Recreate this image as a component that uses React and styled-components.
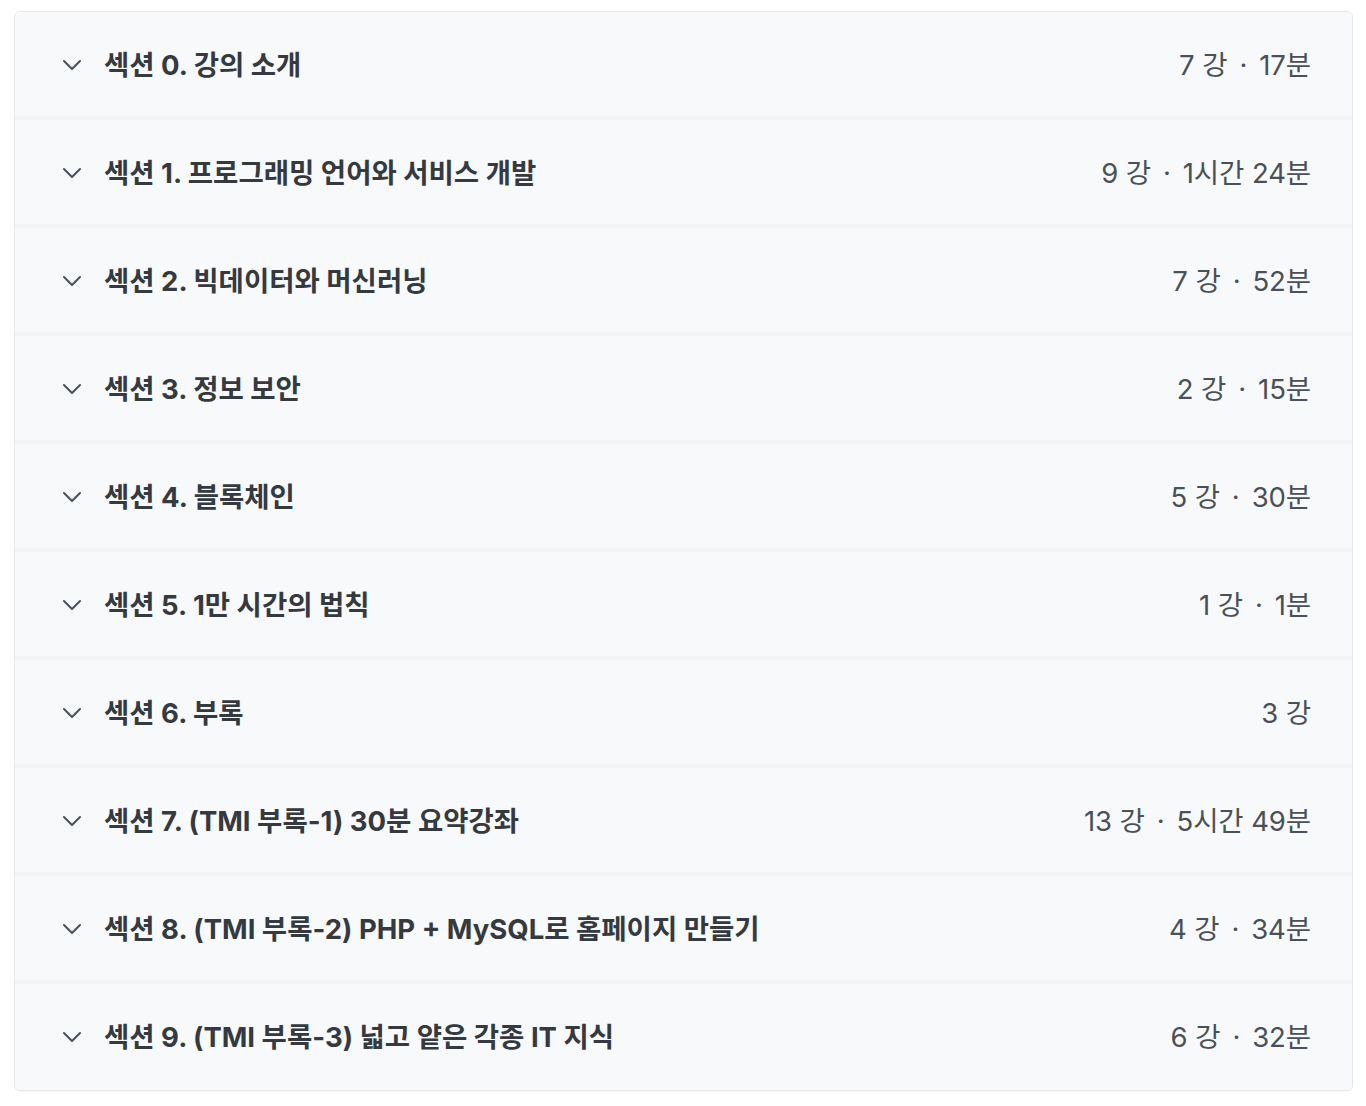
import React from 'react';
import styled, { createGlobalStyle } from 'styled-components';

const GlobalStyle = createGlobalStyle`
  body {
    margin: 0;
    background: #ffffff;
    font-family: Inter, 'Noto Sans CJK KR', sans-serif;
  }
`;

const Page = styled.div`
  padding: 11px 13px 14px 14px;
`;

const Curriculum = styled.ul`
  list-style: none;
  margin: 0;
  padding: 0;
  border: 1px solid #e6e8eb;
  border-radius: 6px;
  overflow: hidden;
  background: #f8f9fa;
  box-shadow: 0 1px 1px rgba(0, 0, 0, 0.03);
`;

const Section = styled.li`
  height: 104px;
  display: flex;
  align-items: center;
  padding: 0 41px 2px 46px;
  box-sizing: border-box;
  background: #f8f9fa;
  border-top: ${p => (p.$first ? 'none' : '4px solid #f1f3f5')};

  &:not(:first-child) {
    height: 108px;
  }

  &:last-child {
    height: 110px;
    padding-bottom: 4px;
  }
`;

const Chevron = styled.span`
  display: flex;
  width: 22px;
  margin: 4px 21px 0 0;
  color: #495057;
`;

const Title = styled.h3`
  flex: 1;
  margin: 0;
  font-family: Inter, 'Noto Sans CJK KR', sans-serif;
  font-size: 27.5px;
  font-weight: 700;
  letter-spacing: 0;
  color: #343a40;
`;

const Meta = styled.span`
  font-family: Inter, 'Noto Sans CJK KR', sans-serif;
  font-size: 27.5px;
  font-weight: 400;
  letter-spacing: -0.1px;
  color: #495057;
  white-space: nowrap;
`;

const Dot = styled.span`
  margin: 0 12px;
`;

const sections = [
  ['섹션 0. 강의 소개', '7 강', '17분'],
  ['섹션 1. 프로그래밍 언어와 서비스 개발', '9 강', '1시간 24분'],
  ['섹션 2. 빅데이터와 머신러닝', '7 강', '52분'],
  ['섹션 3. 정보 보안', '2 강', '15분'],
  ['섹션 4. 블록체인', '5 강', '30분'],
  ['섹션 5. 1만 시간의 법칙', '1 강', '1분'],
  ['섹션 6. 부록', '3 강', null],
  ['섹션 7. (TMI 부록-1) 30분 요약강좌', '13 강', '5시간 49분'],
  ['섹션 8. (TMI 부록-2) PHP + MySQL로 홈페이지 만들기', '4 강', '34분'],
  ['섹션 9. (TMI 부록-3) 넓고 얕은 각종 IT 지식', '6 강', '32분'],
];

function ChevronDown() {
  return (
    <svg width="22" height="22" viewBox="0 0 22 22" fill="none">
      <path d="M3 7 L11 15 L19 7" stroke="currentColor" strokeWidth="2" strokeLinecap="round" strokeLinejoin="round" />
    </svg>
  );
}

export default function App() {
  return (
    <Page>
      <GlobalStyle />
      <Curriculum>
        {sections.map(([title, count, time], i) => (
          <Section key={title} $first={i === 0}>
            <Chevron><ChevronDown /></Chevron>
            <Title>{title}</Title>
            <Meta>
              {count}
              {time && (
                <>
                  <Dot>·</Dot>
                  {time}
                </>
              )}
            </Meta>
          </Section>
        ))}
      </Curriculum>
    </Page>
  );
}
